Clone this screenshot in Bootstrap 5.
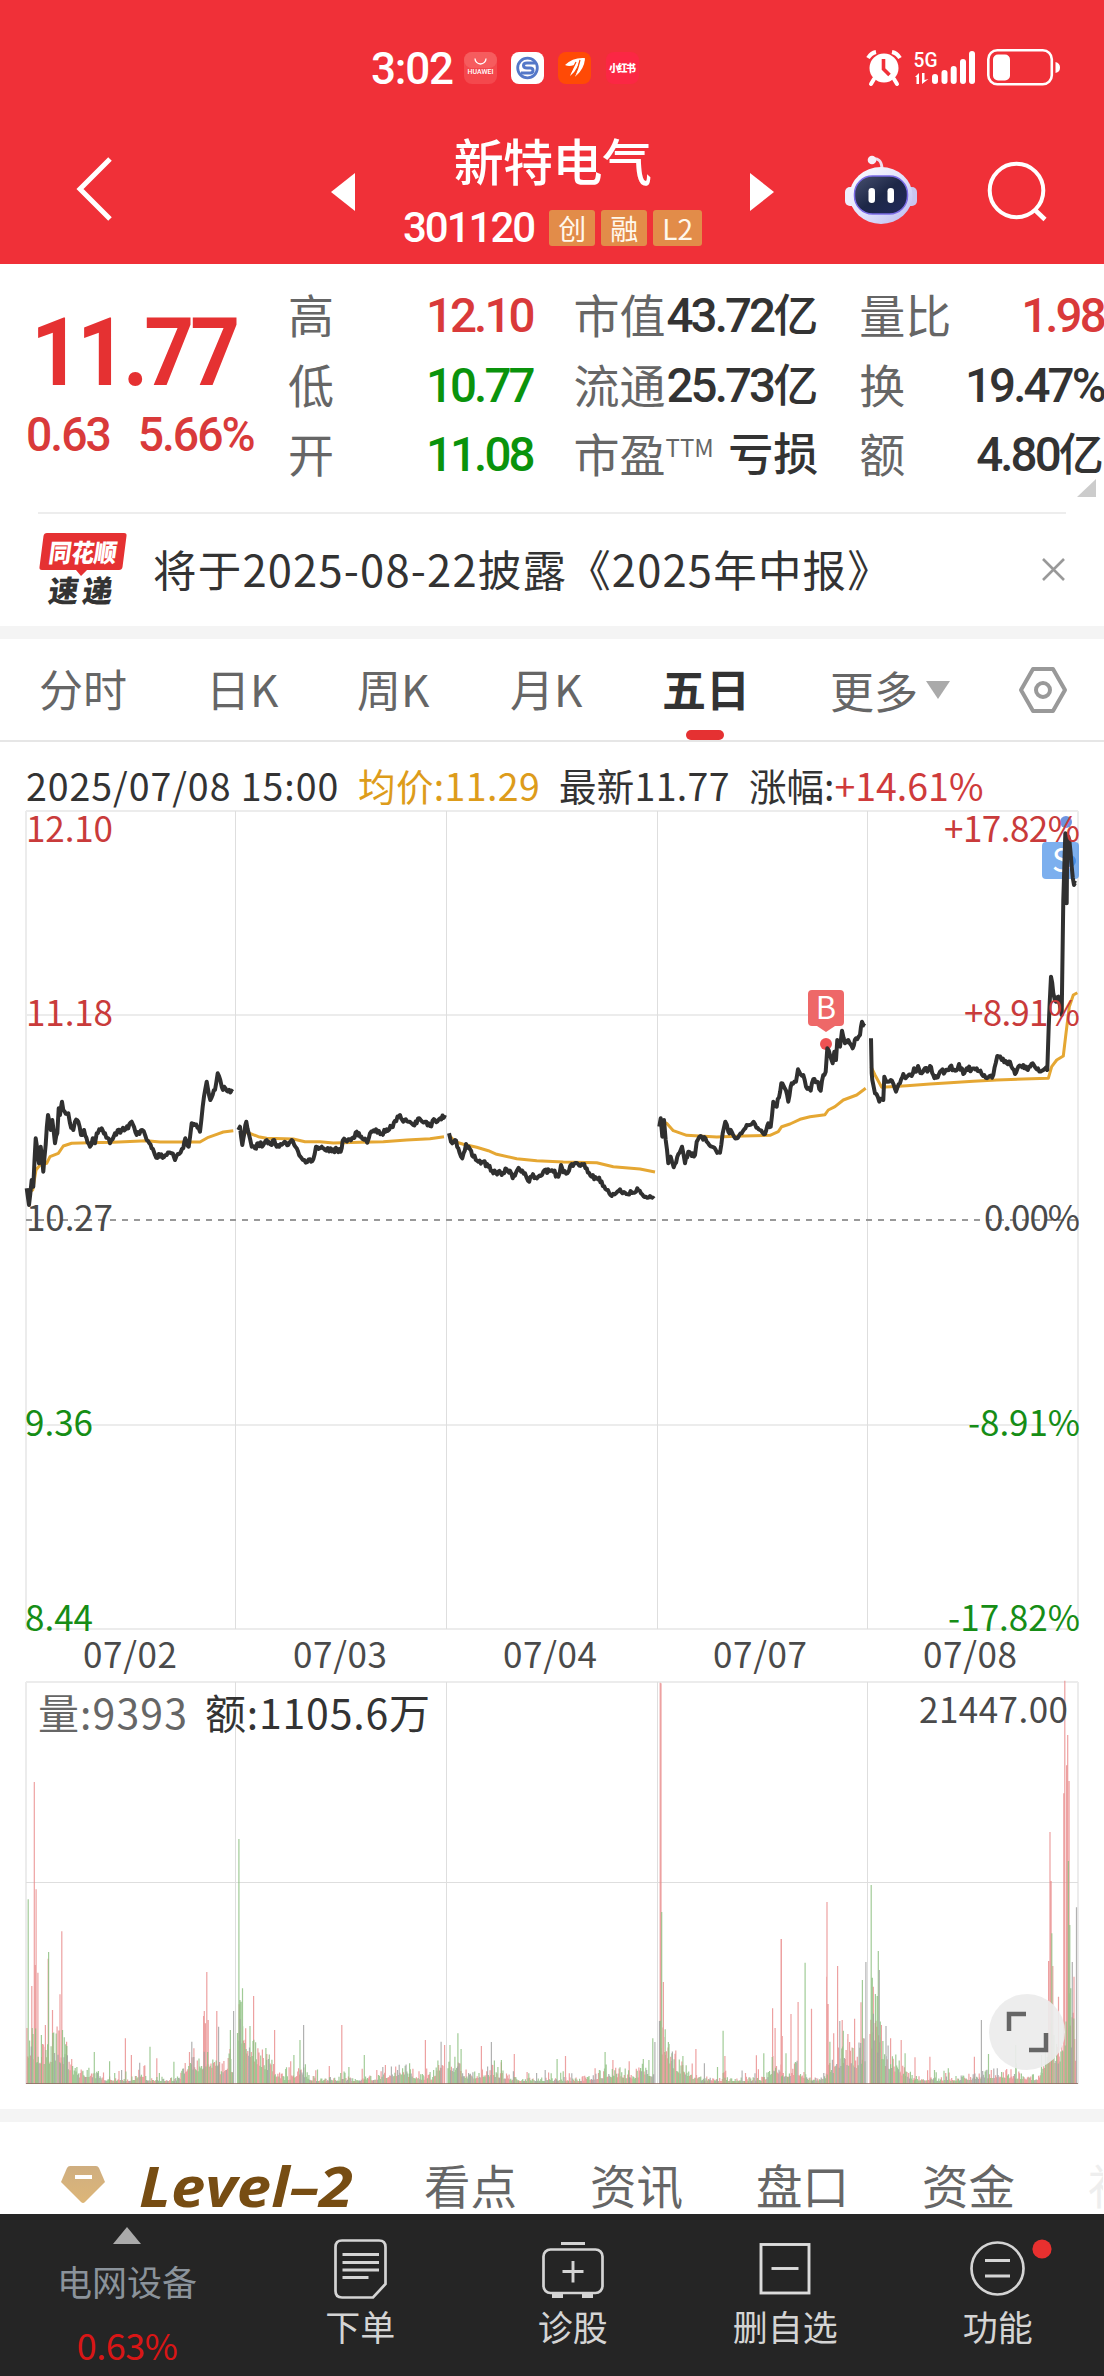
<!DOCTYPE html>
<html lang="zh-CN">
<head>
<meta charset="utf-8">
<meta name="viewport" content="width=device-width, initial-scale=1">
<title>新特电气 301120</title>
<link href="https://cdn.jsdelivr.net/npm/bootstrap@5.3.0/dist/css/bootstrap.min.css" rel="stylesheet">
<style>
  :root{--red:#e53132;--ink:#333;--soft:#666;--green:#0a930c}
  body{width:1104px;height:2376px;overflow:hidden;background:#fff;color:var(--ink);font-family:"Noto Sans CJK SC",sans-serif;-webkit-font-smoothing:antialiased}
  svg{display:block;flex:none}
  .app-head{height:264px;background:#f03038;color:#fff}
  .status-row{height:136px;padding:0 42px 0 371px}
  .clock{font:500 44px/1 Roboto,sans-serif;letter-spacing:-1.2px;width:93px;padding-top:2px}
  .title-row{height:128px;padding:0 55px 0 76px}
  .stock-name{font-size:50px;line-height:50px;font-weight:500;letter-spacing:-.6px;margin-top:-2px}
  .stock-code{font:500 42px/42px Roboto,sans-serif;letter-spacing:-2px}
  .tagbox{height:36px;min-width:46px;padding:0 9px;border-radius:3px;background:#e28c49;color:#fff8ec;font-size:28px;line-height:36px;text-align:center}
  .quote{height:248px}
  .price-col{width:288px;padding-top:49px;color:var(--red)}
  .big-price{font:700 94px/80px Roboto,sans-serif;letter-spacing:-4.2px;margin-left:31px;width:240px;transform:scaleX(.925);transform-origin:0 50%}
  .chg{font:500 48px/56px Roboto,sans-serif;letter-spacing:-2.1px;margin:14px 0 0 26px;width:250px;color:#d93a3a;white-space:nowrap;transform:scaleX(.965);transform-origin:0 50%}
  .q-grid{column-gap:41px;padding-top:16px}
  .q-col{width:244.6px}
  .q-line{height:69.5px;line-height:67px;font-size:46px;white-space:nowrap}
  .q-line .lab{color:var(--soft)}
  .q-line .val{font-family:Roboto,"Noto Sans CJK SC",sans-serif;font-weight:500;font-size:47.5px;line-height:73px;letter-spacing:-2.9px;color:var(--ink)}
  .q-line .val.up,.q-line .val.dn{padding-right:0}
  .q-line .val.up{color:#d93a3a}.q-line .val.dn{color:var(--green)}
  .q-line .val .zi{font-size:45px;letter-spacing:0}
  .ttm{font-size:24px;position:relative;top:-15px;line-height:1}
  .corner{position:absolute;right:8px;top:479px}
  .notice{height:114px;margin:0 38px;border-top:2px solid #ededed}
  .notice .msg{font-size:43.5px;letter-spacing:1.2px;margin:-3px 0 0 25px;white-space:nowrap;line-height:66px}
  .band{height:13px;background:#f4f4f4}
  .tabs{height:103px;border-bottom:2px solid #e6e6e6;color:var(--soft);font-size:44px}
  .tabs .tb{height:101px;line-height:98px;white-space:nowrap}
  .tabs .on{color:var(--ink);font-weight:700;position:relative}
  .tabs .on::after{content:"";position:absolute;left:50%;margin-left:-19px;bottom:0;width:38px;height:10px;border-radius:5px;background:var(--red)}
  .info{height:64px;padding:0 26px;font-size:37.5px;line-height:86px;white-space:nowrap}
  .sub-tabs{height:92px;padding-left:61px;font-size:46.5px;color:var(--soft);white-space:nowrap;overflow:hidden}
  .lv2{font:italic 700 56px "Open Sans",sans-serif;fill:#774d13}
  .dock{height:162px;background:#252525;color:#d4d4d4;font-size:35px}
  .dock .cell{width:212.5px}
  .dock .cell-idx{width:254px;color:#8b939b;line-height:46px}
  .dock .rate{color:#d91616;font-size:36px;line-height:46px;letter-spacing:-.5px}
  .dock .cap{line-height:44px;margin-top:5px}
  .ax{font-size:35px}
</style>
</head>
<body>
<header class="app-head">
  <div class="status-row d-flex align-items-center">
    <div class="clock">3:02</div>
    <svg width="176" height="34" viewBox="0 0 176 34">
      <rect x="0" y="1" width="33" height="32" rx="8" fill="#f4484d"/><rect x="0" y="1" width="33" height="16" rx="8" fill="#f65c5e"/>
      <path d="M11 7.500a5.500 5.500 0 0 0 11 0" fill="none" stroke="#fff" stroke-width="1.300"/>
      <text x="16.500" y="23" font-size="7" font-weight="500" font-family="Roboto,sans-serif" text-anchor="middle" fill="#fff" textLength="26">HUAWEI</text>
      <rect x="47" y="1" width="33" height="32" rx="8" fill="#fff"/>
      <circle cx="63.500" cy="17" r="9.800" fill="none" stroke="#5478c8" stroke-width="2.800"/>
      <path d="M71 12h-8q-3.500 0-3.500 2.500t3.500 2.500h3q3 0 3 2.500t-3 2.500h-9" fill="none" stroke="#5478c8" stroke-width="3"/>
      <rect x="94" y="1" width="33" height="32" rx="8" fill="#ff4a06"/>
      <path d="M101 14q8-8 20-7q-2 8-10 19q2-7 3-11q-3 6-8 10q3-7 4-11q-5 2-9 0z" fill="#fff"/><path d="M115 10q1 8-3 15q8-7 9-17z" fill="#fff"/><path d="M116 9q-2 9-5 15M112 11l-5 10" stroke="#ff4a06" stroke-width="1.200"/>
      <rect x="142" y="1" width="33" height="32" rx="8" fill="#fb2744"/>
      <text x="158.500" y="21" font-size="10" font-weight="900" text-anchor="middle" fill="#fff" textLength="27">小红书</text>
    </svg>
    <svg class="ms-auto" width="197" height="40" viewBox="0 0 197 40">
      <g fill="#fff">
        <circle cx="19" cy="20" r="14.500"/>
        <path d="M3 10Q6 5 11 4" stroke="#fff" stroke-width="4" fill="none"/><path d="M27 4Q32 5 35 10" stroke="#fff" stroke-width="4" fill="none"/>
        <path d="M9 31l-3 5M29 31l3 5" stroke="#fff" stroke-width="4" stroke-linecap="round"/>
        <path d="M18.500 11v10l6 6" stroke="#f03038" stroke-width="3.600" fill="none"/>
        <text x="48.500" y="18.500" font-size="21" font-weight="500" font-family="Roboto,sans-serif" textLength="24" lengthAdjust="spacingAndGlyphs">5G</text>
        <path d="M50 29l4-4v11h-2.500v-7zM57 25h2.500v7l4-1l-6.500 5z"/>
        <rect x="67" y="26" width="6" height="10" rx="3"/><rect x="76.500" y="22" width="6" height="14" rx="3"/><rect x="85.700" y="18" width="6" height="18" rx="3"/><rect x="95" y="11" width="6" height="25" rx="3"/><rect x="104" y="3" width="6" height="33" rx="3"/>
        <rect x="123.300" y="2.300" width="63.500" height="34" rx="9" fill="none" stroke="#fff" stroke-width="2.600"/>
        <rect x="128" y="6.500" width="17" height="26" rx="5"/><path d="M190.500 14q4.500 1 4.500 5.500t-4.500 5.500z"/>
      </g>
    </svg>
  </div>
  <div class="title-row d-flex align-items-start">
    <svg width="38" height="68" viewBox="0 0 38 68" style="margin-top:19px"><path d="M34 4L4 34l30 30" fill="none" stroke="#fff" stroke-width="5"/></svg>
    <svg width="24" height="38" viewBox="0 0 24 38" style="margin:37px 0 0 217px"><path d="M24 0v38L0 19z" fill="#fff"/></svg>
    <div class="d-flex flex-column align-items-center" style="width:395px">
      <div class="stock-name">新特电气</div>
      <div class="d-flex align-items-center" style="margin-top:23px;gap:6px">
        <span class="stock-code" style="margin-right:9px">301120</span><span class="tagbox">创</span><span class="tagbox">融</span><span class="tagbox">L2</span>
      </div>
    </div>
    <svg width="24" height="38" viewBox="0 0 24 38" style="margin-top:37px"><path d="M0 0v38l24-19z" fill="#fff"/></svg>
    <svg width="74" height="70" viewBox="0 0 74 70" style="margin:18px 0 0 70px">
      <defs>
        <linearGradient id="hd" x1="0" y1="0" x2="1" y2="1"><stop offset="0" stop-color="#fff"/><stop offset=".55" stop-color="#dfe0fb"/><stop offset="1" stop-color="#b9b8ef"/></linearGradient>
        <linearGradient id="vs" x1="0" y1="0" x2="1" y2="1"><stop offset="0" stop-color="#47506f"/><stop offset=".5" stop-color="#1d2747"/><stop offset="1" stop-color="#20285a"/></linearGradient>
      </defs>
      <path d="M28 5q9-2 10 9" fill="none" stroke="#f0dcec" stroke-width="3"/><circle cx="28" cy="6" r="4.300" fill="#f7eef8"/>
      <rect x="1" y="33" width="12" height="19" rx="5" fill="#efeefc"/><rect x="61" y="33" width="12" height="19" rx="5" fill="#c9c6f0"/>
      <ellipse cx="37" cy="41.500" rx="31.500" ry="28.400" fill="url(#hd)"/>
      <rect x="10.500" y="22" width="53" height="38" rx="18" fill="url(#vs)" stroke="#7a6be6" stroke-width="1.500"/>
      <rect x="24.500" y="34" width="6.500" height="15" rx="3.200" fill="#fff"/><rect x="43.500" y="34" width="6.500" height="15" rx="3.200" fill="#fff"/>
    </svg>
    <svg class="ms-auto" width="62" height="62" viewBox="0 0 62 62" style="margin-top:25px"><circle cx="29.500" cy="29.500" r="26.800" fill="none" stroke="#fff" stroke-width="4"/><path d="M48 49l10 9.500" stroke="#fff" stroke-width="4.500"/></svg>
  </div>
</header>

<section class="quote d-flex">
  <div class="price-col">
    <div class="big-price">11.77</div>
    <div class="chg"><span>0.63</span><span style="margin-left:29px">5.66%</span></div>
  </div>
  <div class="q-grid d-flex">
    <div class="q-col">
      <div class="q-line d-flex justify-content-between"><span class="lab">高</span><span class="val up">12.10</span></div>
      <div class="q-line d-flex justify-content-between"><span class="lab">低</span><span class="val dn">10.77</span></div>
      <div class="q-line d-flex justify-content-between"><span class="lab">开</span><span class="val dn">11.08</span></div>
    </div>
    <div class="q-col">
      <div class="q-line d-flex justify-content-between"><span class="lab">市值</span><span class="val">43.72<span class="zi">亿</span></span></div>
      <div class="q-line d-flex justify-content-between"><span class="lab">流通</span><span class="val">25.73<span class="zi">亿</span></span></div>
      <div class="q-line d-flex justify-content-between"><span class="lab">市盈<span class="ttm">TTM</span></span><span class="val"><span class="zi">亏损</span></span></div>
    </div>
    <div class="q-col">
      <div class="q-line d-flex justify-content-between"><span class="lab">量比</span><span class="val up">1.98</span></div>
      <div class="q-line d-flex justify-content-between"><span class="lab">换</span><span class="val">19.47%</span></div>
      <div class="q-line d-flex justify-content-between"><span class="lab">额</span><span class="val">4.80<span class="zi">亿</span></span></div>
    </div>
  </div>
  <svg class="corner" width="19" height="18"><path d="M19 0v18H0z" fill="#ccc"/></svg>
</section>

<section class="notice d-flex align-items-center">
  <svg width="90" height="74" viewBox="0 0 90 74" style="margin-top:-2px">
    <path d="M9 1h77q3 0 2.500 3l-4 31q-.5 3-3.500 3H49l-6 6l-5-6H4q-3 0-2.500-3l4-31Q6 1 9 1z" fill="#e53132"/>
    <g transform="skewX(-8)" font-weight="900">
      <text x="14" y="30" font-size="25" fill="#fff" textLength="68" lengthAdjust="spacingAndGlyphs">同花顺</text>
      <text x="19" y="70" font-size="30" fill="#333" textLength="64" lengthAdjust="spacing">速递</text>
    </g>
  </svg>
  <div class="msg">将于2025-08-22披露《2025年中报》</div>
  <svg class="ms-auto" width="25" height="25" style="margin-top:-2px"><path d="M2 2l21 21M23 2L2 23" stroke="#999" stroke-width="2.600"/></svg>
</section>
<div class="band"></div>

<nav class="tabs d-flex align-items-start">
  <div class="tb" style="width:171px;padding-left:39px">分时</div>
  <div class="tb" style="width:150px;padding-left:35px">日K</div>
  <div class="tb" style="width:152px;padding-left:36px">周K</div>
  <div class="tb" style="width:189px;padding-left:37px">月K</div>
  <div class="tb on text-center" style="width:86px">五日</div>
  <div class="tb d-flex align-items-center" style="width:270px;padding-left:82px">更多<svg width="24" height="20" style="margin-left:8px"><path d="M0 1h24L12 19z" fill="#aaa"/></svg></div>
  <svg width="50" height="48" viewBox="0 0 50 48" style="margin-top:27px"><path d="M15 3h20L47 24L35 45H15L3 24z" fill="none" stroke="#999" stroke-width="4" stroke-linejoin="round"/><circle cx="25" cy="24" r="7" fill="none" stroke="#999" stroke-width="4"/></svg>
</nav>
<section class="info d-flex">
  <span style="width:332px;letter-spacing:.95px">2025/07/08 15:00</span>
  <span style="width:201px;color:#dd9c1b;letter-spacing:.4px">均价:11.29</span>
  <span style="width:190px;letter-spacing:.3px">最新11.77</span>
  <span>涨幅:<span style="color:#cf3b3b">+14.61%</span></span>
</section>

<svg id="plot" width="1104" height="1303" viewBox="0 806 1104 1303">
  <g id="grid"></g>
  <g id="volume"></g>
  <g>
    <rect x="1042" y="842" width="37" height="37" rx="4" fill="#4a90e8" opacity=".72"/>
    <text x="1052" y="872" font-size="32" fill="#fff">S</text>
    <circle cx="1066" cy="822" r="6" fill="#4a78d8" opacity=".8"/><circle cx="1070" cy="861" r="6" fill="#2f7fe0" opacity=".7"/>
    <path d="M812 990h28q4 0 4 4v28q0 4-4 4h-5l-9 6-9-6h-5q-4 0-4-4v-28q0-4 4-4z" fill="#ee6868"/>
    <text x="826" y="1019" font-size="31" fill="#fff" text-anchor="middle">B</text>
    <circle cx="826" cy="1044" r="6" fill="#ee5253"/>
  </g>
  <g id="lines" fill="none" stroke-linejoin="round"></g>
  <g class="ax">
    <g fill="#c93b3b"><text x="26" y="842" textLength="87">12.10</text><text x="26" y="1026" textLength="87">11.18</text><text x="944" y="842" textLength="136">+17.82%</text><text x="964" y="1026" textLength="116">+8.91%</text></g>
    <g fill="#4a4a4a"><text x="26" y="1231" textLength="87">10.27</text><text x="984" y="1231" textLength="96">0.00%</text>
      <g text-anchor="middle"><text x="130" y="1668" textLength="94">07/02</text><text x="340" y="1668" textLength="94">07/03</text><text x="550" y="1668" textLength="94">07/04</text><text x="760" y="1668" textLength="94">07/07</text><text x="970" y="1668" textLength="94">07/08</text></g>
      <text x="919" y="1723" textLength="149">21447.00</text></g>
    <g fill="#168d16"><text x="25" y="1436" textLength="68">9.36</text><text x="25" y="1631" textLength="68">8.44</text><text x="968" y="1436" textLength="112">-8.91%</text><text x="948" y="1631" textLength="132">-17.82%</text></g>
  </g>
  <text x="38" y="1729" font-size="41" fill="#666" textLength="149">量:9393</text>
  <text x="205" y="1729" font-size="41" fill="#333" textLength="225">额:1105.6万</text>
  <circle cx="1027" cy="2032" r="38" fill="#ebebeb" opacity=".92"/>
  <path d="M1009 2052v-38" stroke="none"/>
  <path d="M1009 2031v-17h17M1029 2050h17v-17" fill="none" stroke="#666" stroke-width="4.500"/>
</svg>
<div class="band"></div>

<nav class="sub-tabs d-flex align-items-center">
  <svg width="44" height="38" viewBox="0 0 44 38" style="margin-top:34px"><defs><linearGradient id="gm" x1="0" y1="0" x2="0" y2="1"><stop offset="0" stop-color="#cfae80"/><stop offset="1" stop-color="#ddb678"/></linearGradient></defs><path d="M9 0h26q2 0 3 2l6 14-20 20q-2 2-4 0L0 16L6 2q1-2 3-2z" fill="url(#gm)"/><rect x="14" y="9" width="17" height="4" fill="#fff"/></svg>
  <svg width="220" height="60" viewBox="0 0 220 60" style="margin:32px 0 0 34px"><text class="lv2" x="0" y="53" textLength="214" lengthAdjust="spacingAndGlyphs">Level–2</text></svg>
  <span style="width:166px;margin:32px 0 0 65px">看点</span>
  <span style="width:166px;margin-top:32px">资讯</span>
  <span style="width:166px;margin-top:32px">盘口</span>
  <span style="width:166px;margin-top:32px">资金</span>
  <span style="width:15px;margin-top:32px;overflow:hidden;color:#eee">社</span>
</nav>

<footer class="dock d-flex">
  <div class="cell-idx d-flex flex-column align-items-center">
    <svg width="28" height="17" style="margin-top:13px"><path d="M14 0l14 17H0z" fill="#aaa"/></svg>
    <div style="margin-top:14px">电网设备</div><div class="rate" style="margin-top:17px">0.63%</div>
  </div>
  <div class="cell d-flex flex-column align-items-center">
    <svg width="53" height="60" viewBox="0 0 53 60" style="margin-top:25px"><path d="M8 1.500h37q6.500 0 6.500 6.500v37L39 58.500H8Q1.500 58.500 1.500 52V8Q1.500 1.500 8 1.500z" fill="none" stroke="#d4d4d4" stroke-width="2.700"/><path d="M8.500 15.500h36.500M8.500 23.500h36.500M8.500 31h36.500M8.500 38.500h26" stroke="#d4d4d4" stroke-width="2.900"/></svg>
    <div class="cap">下单</div>
  </div>
  <div class="cell d-flex flex-column align-items-center">
    <svg width="62" height="60" viewBox="0 0 62 60" style="margin-top:25px"><rect x="1.500" y="10.500" width="59" height="43.500" rx="7" fill="none" stroke="#d4d4d4" stroke-width="2.700"/><path d="M19 4.500h24M20.500 32.500h21M31 22v21.500" stroke="#d4d4d4" stroke-width="2.900"/><path d="M10 55h11v4H10zM40 55h11v4H40z" fill="#d4d4d4"/></svg>
    <div class="cap">诊股</div>
  </div>
  <div class="cell d-flex flex-column align-items-center">
    <svg width="52" height="60" viewBox="0 0 52 60" style="margin-top:25px"><rect x="2" y="5.500" width="48" height="48.500" fill="none" stroke="#dcdcdc" stroke-width="2.900"/><path d="M12.500 29.500h27" stroke="#dcdcdc" stroke-width="2.900"/></svg>
    <div class="cap">删自选</div>
  </div>
  <div class="cell d-flex flex-column align-items-center position-relative">
    <svg width="55" height="60" viewBox="0 0 55 60" style="margin-top:25px"><circle cx="27.500" cy="29.500" r="26" fill="none" stroke="#d4d4d4" stroke-width="2.700"/><path d="M15 21.500h25M15 37h25" stroke="#d4d4d4" stroke-width="2.900"/></svg>
    <svg class="position-absolute" width="20" height="20" style="left:140px;top:25px"><circle cx="10" cy="10" r="9.600" fill="#e8302f"/></svg>
    <div class="cap">功能</div>
  </div>
</footer>

<script src="https://cdn.jsdelivr.net/npm/bootstrap@5.3.0/dist/js/bootstrap.bundle.min.js"></script>
<script>
const NS='http://www.w3.org/2000/svg';
const add=(parent,tag,attrs)=>{const e=document.createElementNS(NS,tag);for(const k in attrs)e.setAttribute(k,attrs[k]);document.getElementById(parent).appendChild(e);};
let seed=20250708;const rnd=()=>(seed=(seed*1664525+1013904223)%4294967296)/4294967296;

// grid of the price pane and of the volume pane
let g='M26 811H1078M26 1015H1078M26 1425H1078M26 1629H1078M26 811V1629M1078 811V1629M26 1682H1078M26 1682V2084M1078 1682V2084';
add('grid','path',{d:g,stroke:'#ececec','stroke-width':2,fill:'none'});
g='M26 1882.5H1078';for(const x of [235.5,446.5,657.5,867.5])g+=`M${x} 811V1629M${x} 1682V2084`;
add('grid','path',{d:g,stroke:'#dedede','stroke-width':1,fill:'none'});
add('grid','path',{d:'M26 1220H1078',stroke:'#999','stroke-width':2,'stroke-dasharray':'6 6',fill:'none'});

// per day: x origin, y origin, price points, average points (thirds of a pixel)
const days=[
[0,800,'80,1165 87,1215 95,1140 100,1160 107,1015 117,1090 122,1040 130,1115 144,945 152,990 157,960 165,1030 172,1000 176,925 180,945 186,905 190,930 205,940 210,970 220,990 225,965 235,965 243,1005 252,990 270,1040 278,1015 285,1030 290,1000 305,985 315,1000 330,1030 345,1000 365,990 385,985 395,965 410,1005 427,990 440,1020 455,1045 465,1065 480,1070 500,1065 515,1060 525,1080 550,1045 556,1015 566,1040 575,970 585,975 600,995 608,920 620,845 631,900 645,870 653,820 665,860 680,872 698,875',
'82,1180 98,1170 108,1110 120,1095 140,1090 150,1070 175,1060 190,1038 215,1030 270,1028 340,1027 440,1022 480,1026 600,1026 625,1012 650,1003 670,996 700,992'],
[0,800,'715,990 720,980 727,1035 733,1000 739,965 746,1000 755,1040 765,1045 775,1030 790,1035 800,1020 815,1035 823,1020 830,1040 850,1030 865,1035 875,1020 890,1045 905,1075 917,1088 930,1078 940,1078 948,1040 965,1040 975,1050 1000,1048 1022,1055 1028,1022 1045,1018 1060,1012 1070,995 1080,1010 1102,1028 1110,1000 1128,988 1145,1000 1160,988 1175,982 1185,962 1200,945 1210,965 1225,965 1240,975 1250,970 1258,955 1275,965 1290,978 1305,960 1320,955 1335,945',
'722,995 750,1000 775,1010 800,1015 880,1017 915,1025 960,1025 1000,1029 1080,1027 1150,1025 1220,1020 1290,1016 1332,1010'],
[430,960,'57,520 63,545 75,540 85,565 97,595 108,552 120,568 130,590 145,605 160,605 175,620 190,640 205,635 215,645 230,628 240,632 248,655 262,630 277,632 285,640 294,662 305,650 325,650 340,635 370,635 385,650 393,615 400,637 417,632 425,612 455,612 470,625 485,650 500,655 515,665 530,690 545,708 558,700 570,688 585,698 610,698 622,685 640,708 660,708 672,716',
'57,525 75,545 100,553 140,562 175,572 200,583 260,596 320,602 400,606 500,608 550,620 630,627 675,636'],
[430,960,'688,500 692,475 697,530 702,480 707,540 715,610 722,590 731,622 742,590 756,560 765,610 775,575 785,588 795,585 800,545 812,528 830,545 845,560 870,578 878,520 886,485 895,515 905,515 920,535 935,520 950,495 975,492 990,510 1005,522 1015,490 1022,500 1030,425 1040,440 1054,370 1064,385 1075,425 1085,370 1098,365 1104,328 1120,345 1128,380 1142,392 1150,358 1160,365 1172,392 1180,345 1187,335 1192,265 1200,285 1208,310 1213,275 1218,300 1222,240 1230,260 1236,212 1245,250 1255,240 1268,265 1278,235 1290,225 1296,185 1305,198',
'690,480 710,490 730,512 770,526 860,531 940,528 1020,526 1045,515 1055,500 1080,492 1110,478 1140,470 1185,464 1195,450 1215,440 1240,420 1280,405 1307,385'],
[840,800,'93,715 95,820 97,840 105,880 118,905 130,900 133,830 140,845 152,840 168,875 180,850 190,822 200,830 215,828 222,805 228,815 234,798 245,820 255,805 262,815 270,798 280,825 290,833 300,815 315,815 330,800 345,812 357,792 370,822 380,805 395,808 410,805 425,822 445,832 460,825 467,790 472,768 485,780 500,790 510,785 525,822 535,800 550,795 560,808 578,790 590,808 622,810 626,680 633,530 640,580 648,605 655,590 665,645 670,300 676,100 680,310 682,110 688,120 695,200 702,255 708,250',
'93,800 105,825 125,862 200,857 270,852 330,848 400,844 470,840 550,837 625,835 635,800 650,780 670,768 678,700 688,620 700,585 712,578']];
for(const [ox,oy,price,avg] of days){
  const conv=s=>s.split(' ').map(p=>p.split(',').map(Number)).map(([x,y])=>[ox+x/3,oy+y/3]);
  add('lines','polyline',{points:conv(avg).map(p=>p.map(n=>n.toFixed(1))).join(' '),stroke:'#e5a733','stroke-width':3});
  const pts=conv(price),out=[pts[0]];
  for(let i=1;i<pts.length;i++){
    const [a,b]=pts[i-1],[c,d]=pts[i],n=Math.max(1,Math.round((c-a)/1.3));
    for(let k=1;k<=n;k++)out.push([a+(c-a)*k/n,b+(d-b)*k/n+(k<n?(rnd()-.5)*5:0)]);
  }
  add('lines','polyline',{points:out.map(p=>p.map(n=>n.toFixed(1))).join(' '),stroke:'#303030','stroke-width':4});
}

// minute volume: quiet background bars, then the marked peaks
const COL={r:'#e98c8c',g:'#8cbf80',k:'#a0a0a0'},base=2084,acc={r:'',g:'',k:''};
const bar=(x,h,c)=>{acc[c]+=`M${x.toFixed(1)} ${base}v${(-h).toFixed(1)}`;};
const humps=[[[26,52,26],[60,36,14],[190,26,8],[207,34,10],[228,28,8],[90,10,10],[140,10,5]],[[238,80,12],[258,35,16],[300,14,8],[400,12,20],[440,22,6]],[[449,26,14],[490,12,16],[615,10,20],[645,14,8]],[[660,55,14],[680,12,14],[775,22,7],[795,16,10],[845,38,15],[865,38,8]],[[870,75,12],[890,25,16],[1000,8,30],[1050,60,6],[1068,95,9]]];
const start=[27,237.5,448,659.5,870];
start.forEach((s,d)=>{for(let m=0;m<240;m++){const x=s+m*.86;let e=7;for(const [c,h,w] of humps[d])e+=h*Math.exp(-Math.pow((x-c)/w,2));
  const r=rnd(),v=rnd();bar(x,Math.max(3,e*(.4+.65*v*v)+(rnd()>.93?8:0)),r<.44?'r':r<.86?'g':'k');}});
const A='79,718,g 96,366,r 101,688,r 99,915,r 106,938,r 89,978,r 136,876,g 135,896,r 147,1050,r 173,814,r 168,1003,r 127,1095,r 116,1125,g 175,1110,g 180,1132,g 187,1158,g 264,1176,g 307,1204,g 351,1135,r 368,1185,r 420,1160,g 439,1195,r 487,1205,g 537,1145,k 543,1165,r 570,1068,r 572,1053,r 579,936,r 583,1080,r 575,1090,r 607,1053,r 612,1100,k 645,1110,g 654,1053,k 669,537,g 672,1020,g 675,1025,g 679,985,g 688,1105,r 700,1098,g 710,1008,r 722,1165,r 747,1182,r 769,1110,r 814,1204,r 823,1185,g 840,1140,g 850,1095,k 922,1218,r 957,1095,r 977,1221,g 1020,1185,g 1147,1210,g 1191,1140,r 1235,1145,k 1245,1155,r 1260,1155,g 1282,1120,g 1291,1167,g 1348,1158,r 1376,1146,k 1404,1200,g 1440,1182,r 1560,1197,g';
const B='20,1197,g 44,1188,r 156,1176,g 178,1200,r 224,1204,r 264,1197,g 280,1200,g 291,1135,g 297,1146,k 312,68,r 314,70,r 316,756,g 321,966,r 326,1108,g 335,1146,g 345,1180,g 376,1188,g 413,1167,r 437,1210,k 474,1221,g 490,1112,g 495,1188,r 584,1186,r 605,1180,g 630,1045,r 637,1104,r 654,837,r 655,837,r 657,1128,r 668,1180,g 682,1062,r 702,1026,r 722,908,g 740,1046,r 784,726,r 783,950,r 787,1032,r 792,1145,g 803,1120,r 814,918,r 820,1083,k 827,1080,r 830,1112,g 843,1122,r 862,1076,r 880,1027,r 884,960,g 894,906,k 909,675,g 912,953,g 915,980,r 921,1002,g 926,1008,g 929,873,g 932,930,k 938,1095,r 951,1098,k 964,1135,r 994,1140,r 1005,1180,g 1033,1192,r 1075,1190,r 1201,1190,r 1221,1080,k 1241,1182,g 1318,1155,g 1391,1185,g 1411,903,r 1415,516,r 1418,663,r 1420,820,g 1423,918,r 1439,1010,r 1454,400,r 1457,62,r 1462,316,r 1465,225,r 1469,363,r 1467,603,g 1471,795,g 1474,985,g 1478,906,k 1483,950,r 1490,742,k';
for(const [s,o,k] of [[A,0,2.8],[B,550,2.83]])for(const t of s.split(' ')){const [x,y,c]=t.split(',');bar(o+x/k,base-1660-y/3,c);}
for(const c of ['r','g','k'])add('volume','path',{d:acc[c],stroke:COL[c],'stroke-width':1.2,opacity:.82,fill:'none'});
add('volume','path',{d:'M26 2083.500H1078',stroke:'#8d6b62','stroke-width':1,fill:'none',opacity:.8});
</script>
</body>
</html>
